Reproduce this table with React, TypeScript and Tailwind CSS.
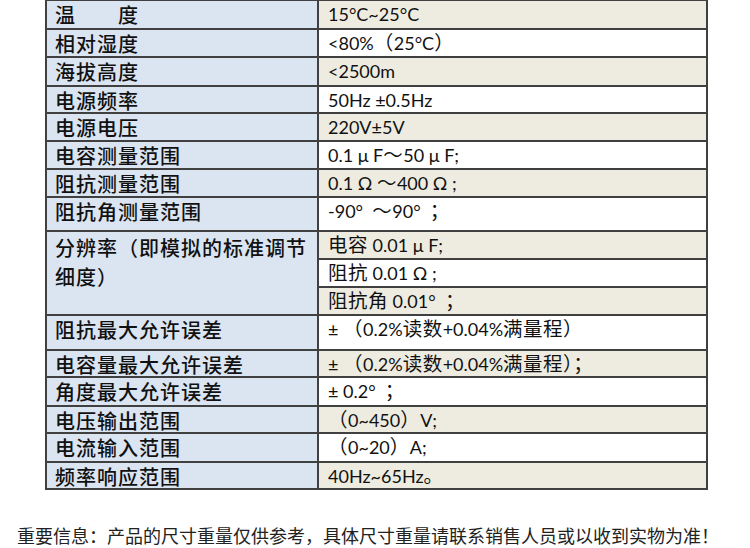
const rows: [string, string][] = [
  ["温　　度", "15°C~25°C"],
  ["相对湿度", "<80%（25°C）"],
  ["海拔高度", "<2500m"],
  ["电源频率", "50Hz ±0.5Hz"],
  ["电源电压", "220V±5V"],
  ["电容测量范围", "0.1 μ F～50 μ F;"],
  ["阻抗测量范围", "0.1 Ω ～400 Ω ;"],
  ["阻抗角测量范围", "-90°  ～90°  ；"],
];

const rowsAfter: [string, string][] = [
  ["阻抗最大允许误差", "± （0.2%读数+0.04%满量程）"],
  ["电容量最大允许误差", "± （0.2%读数+0.04%满量程）；"],
  ["角度最大允许误差", "± 0.2°  ；"],
  ["电压输出范围", "（0~450）V;"],
  ["电流输入范围", "（0~20）A;"],
  ["频率响应范围", "40Hz~65Hz。"],
];

const label =
  "bg-[#dbe5f1] pl-[8px] pr-2 text-[20px] font-medium leading-[27px] tracking-[1px] text-[#111] [font-family:'Noto_Sans_CJK_SC',sans-serif]";
const value =
  "pl-[9px] text-[18px] leading-[26px] whitespace-pre text-[#111] [font-family:Lato,'Noto_Sans_CJK_SC',sans-serif]";

// CJK runs are set a little larger than the Latin text, as in the original sheet
function Value({ text }: { text: string }) {
  const parts = text.split(/([\u3000-\u9fff\uff00-\uffef]+)/);
  return (
    <>
      {parts.map((p, i) =>
        i % 2 === 1 ? (
          <span key={i} className="text-[19.5px] tracking-[0.5px]">
            {p}
          </span>
        ) : (
          p
        )
      )}
    </>
  );
}

export default function App() {
  let stripe = 0;
  const bg = () => (stripe++ % 2 === 0 ? "bg-[#eeece1]" : "bg-white");

  return (
    <div className="w-[750px] h-[548px] bg-white overflow-hidden">
      <div className="ml-[45px] w-[663px] border-2 border-t border-[#404040] bg-[#404040] grid grid-cols-[270px_1fr] gap-[2px] grid-rows-[27px_26px_27px_25px_26px_26px_26px_32px_26px_26px_26px_33px_25px_27px_25px_27px_25px]">
        {rows.map(([k, v]) => (
          <div key={k} className="contents">
            <div className={label}>{k}</div>
            <div className={`${value} ${bg()}`}>
              <Value text={v} />
            </div>
          </div>
        ))}
        <div className={`${label} row-span-3 leading-[29px] pt-[1px]`}>分辨率（即模拟的标准调节细度）</div>
        <div className={`${value} ${bg()}`}>
          <Value text="电容 0.01 μ F;" />
        </div>
        <div className={`${value} ${bg()}`}>
          <Value text="阻抗 0.01 Ω ;" />
        </div>
        <div className={`${value} ${bg()}`}>
          <Value text="阻抗角 0.01°  ；" />
        </div>
        {rowsAfter.map(([k, v]) => (
          <div key={k} className="contents">
            <div className={label}>{k}</div>
            <div className={`${value} ${bg()}`}>
              <Value text={v} />
            </div>
          </div>
        ))}
      </div>
      <p className="mt-[33px] pl-[17px] text-[18px] leading-[24px] text-[#222] [font-family:'Noto_Sans_CJK_SC',sans-serif]">
        重要信息：产品的尺寸重量仅供参考，具体尺寸重量请联系销售人员或以收到实物为准！
      </p>
    </div>
  );
}
